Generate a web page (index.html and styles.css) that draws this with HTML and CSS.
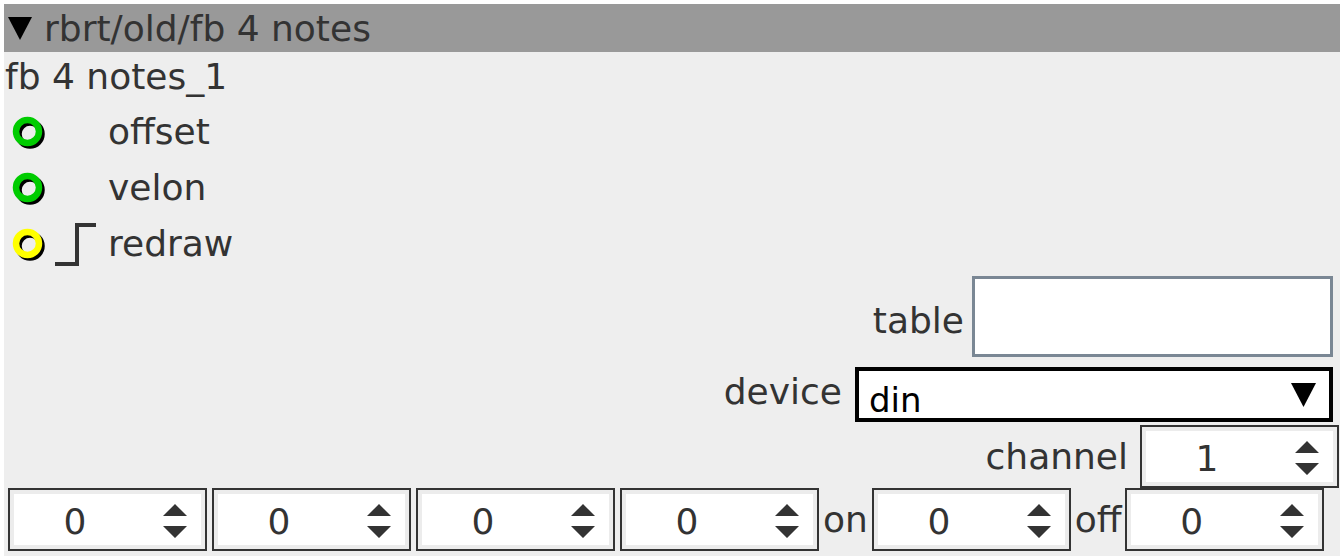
FILE: index.html
```html
<!DOCTYPE html>
<html lang="en">
<head>
  <meta charset="utf-8" />
  <title>rbrt/old/fb 4 notes</title>
  <link rel="stylesheet" href="styles.css">
</head>
<body>
  <div class="panel">
    <div class="title">
      <svg class="caret" width="24" height="23" viewBox="0 0 24 23"><path d="M0 0H24L12 23Z" fill="#000"/></svg>
      <span>rbrt/old/fb 4 notes</span>
    </div>
    <div class="name">fb 4 notes_1</div>

    <ul class="inlets">
      <li>
        <svg class="port" width="38" height="56" viewBox="0 0 38 56">
          <circle cx="20" cy="31" r="11.5" fill="none" stroke="#000" stroke-width="6.5"/>
          <circle cx="17.5" cy="28.5" r="11.5" fill="none" stroke="#00cc00" stroke-width="6.5"/>
        </svg>
        <span class="kind"></span>
        <span class="label">offset</span>
      </li>
      <li>
        <svg class="port" width="38" height="56" viewBox="0 0 38 56">
          <circle cx="20" cy="31" r="11.5" fill="none" stroke="#000" stroke-width="6.5"/>
          <circle cx="17.5" cy="28.5" r="11.5" fill="none" stroke="#00cc00" stroke-width="6.5"/>
        </svg>
        <span class="kind"></span>
        <span class="label">velon</span>
      </li>
      <li>
        <svg class="port" width="38" height="56" viewBox="0 0 38 56">
          <circle cx="20" cy="31" r="11.5" fill="none" stroke="#000" stroke-width="6.5"/>
          <circle cx="17.5" cy="28.5" r="11.5" fill="none" stroke="#ffff00" stroke-width="6.5"/>
        </svg>
        <svg class="kind" width="44" height="56" viewBox="0 0 44 56">
          <path d="M3 49H25V10H44" fill="none" stroke="#333" stroke-width="4"/>
        </svg>
        <span class="label">redraw</span>
      </li>
    </ul>

    <div class="field field-table">
      <label for="table">table</label>
      <input type="text" id="table" class="text-input">
    </div>

    <div class="field field-device">
      <label>device</label>
      <div class="select">
        <span>din</span>
        <svg width="25" height="24" viewBox="0 0 25 24"><path d="M0 0H25L12.5 24Z" fill="#000"/></svg>
      </div>
    </div>

    <div class="field field-channel">
      <label>channel</label>
      <div class="spin">
        <span class="val">1</span>
        <svg class="arrows" width="24" height="34" viewBox="0 0 24 34"><path d="M0 12L12 0L24 12Z M0 22H24L12 34Z" fill="#333"/></svg>
      </div>
    </div>

    <div class="spins">
      <div class="spin"><span class="val">0</span><svg class="arrows" width="24" height="34" viewBox="0 0 24 34"><path d="M0 12L12 0L24 12Z M0 22H24L12 34Z" fill="#333"/></svg></div>
      <div class="spin"><span class="val">0</span><svg class="arrows" width="24" height="34" viewBox="0 0 24 34"><path d="M0 12L12 0L24 12Z M0 22H24L12 34Z" fill="#333"/></svg></div>
      <div class="spin"><span class="val">0</span><svg class="arrows" width="24" height="34" viewBox="0 0 24 34"><path d="M0 12L12 0L24 12Z M0 22H24L12 34Z" fill="#333"/></svg></div>
      <div class="spin"><span class="val">0</span><svg class="arrows" width="24" height="34" viewBox="0 0 24 34"><path d="M0 12L12 0L24 12Z M0 22H24L12 34Z" fill="#333"/></svg></div>
      <span class="spin-label">on</span>
      <div class="spin"><span class="val">0</span><svg class="arrows" width="24" height="34" viewBox="0 0 24 34"><path d="M0 12L12 0L24 12Z M0 22H24L12 34Z" fill="#333"/></svg></div>
      <span class="spin-label spin-label-off">off</span>
      <div class="spin"><span class="val">0</span><svg class="arrows" width="24" height="34" viewBox="0 0 24 34"><path d="M0 12L12 0L24 12Z M0 22H24L12 34Z" fill="#333"/></svg></div>
    </div>
  </div>
</body>
</html>
```

FILE: styles.css
```css
body {
  margin: 4px;
  background-color: #fff;
  font-family: "DejaVu Sans", sans-serif;
  font-size: 36px;
  color: #333;
}

.panel {
  height: 552px;
  background-color: #eee;
  overflow: hidden;
}

.title {
  display: flex;
  align-items: center;
  height: 48px;
  padding-left: 4px;
  background-color: #999;
  white-space: nowrap;
}

.caret {
  margin-right: 12px;
}

.name {
  line-height: 42px;
  padding: 4px 0 5px 1px;
}

.inlets {
  list-style: none;
  margin: 0;
  padding: 0;
}

.inlets li {
  display: flex;
  align-items: center;
  height: 56px;
}

.port {
  margin-left: 6px;
}

.kind {
  display: block;
  width: 44px;
  height: 56px;
  margin-left: 4px;
}

.label {
  margin-left: 12px;
}

.field {
  display: flex;
  justify-content: flex-end;
  align-items: center;
}

.field label {
  white-space: nowrap;
}

.field-table {
  margin-top: 5px;
  padding-right: 7px;
  gap: 8px;
}

.field-table label {
  padding-top: 8px;
}

.text-input {
  box-sizing: border-box;
  width: 361px;
  height: 81px;
  margin: 0;
  border: 3px solid #7a8794;
  background-color: #fff;
  outline: none;
}

.field-device {
  margin-top: 10px;
  padding-right: 7px;
  gap: 13px;
}

.field-device label {
  padding-bottom: 6px;
}

.select {
  box-sizing: border-box;
  display: flex;
  justify-content: space-between;
  align-items: center;
  width: 478px;
  height: 55px;
  padding: 0 13px 0 10px;
  border: 4px solid #000;
  background-color: #fff;
  color: #000;
  font-size: 34px;
}

.select span {
  padding-top: 10px;
}

.field-channel {
  margin-top: 3px;
  padding-right: 1px;
  gap: 12px;
}

.spin {
  box-sizing: border-box;
  display: flex;
  align-items: center;
  width: 199px;
  height: 63px;
  border: 2px solid #333;
  background-color: #fff;
  box-shadow: inset 0 0 0 4px #ececec;
}

.val {
  width: 130px;
  padding-top: 4px;
  text-align: center;
}

.arrows {
  margin: 3px 0 0 23px;
}

.spins {
  display: flex;
  align-items: center;
  gap: 5px;
  padding-left: 4px;
}

.spin-label {
  margin: 0 -1px;
}

.spin-label-off {
  margin: 0 -2px 0 -1px;
}
```
